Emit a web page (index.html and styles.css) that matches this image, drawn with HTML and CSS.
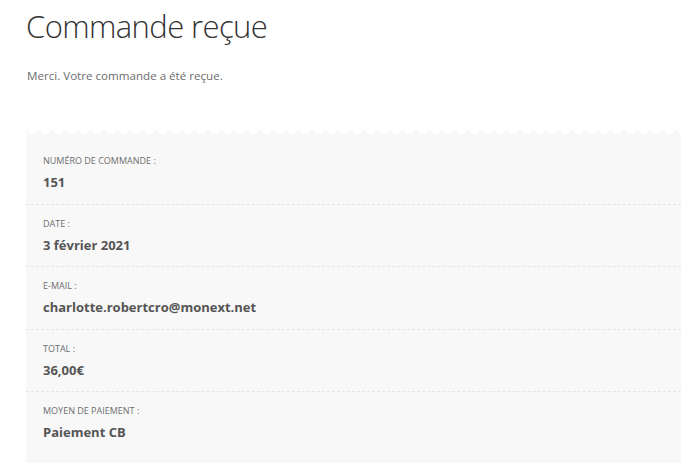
FILE: index.html
```html
<!doctype html>
<html lang="fr">

<head>
    <meta charset="UTF-8" />
    <meta name="viewport" content="width=device-width, initial-scale=1.0" />
    <title>Commande reçue</title>
    <link rel="stylesheet" href="styles.css">
</head>

<body>
    <div class="page">
        <h1 class="page-title">Commande reçue</h1>

        <p class="thankyou">Merci. Votre commande a été reçue.</p>

        <!-- Order overview -->
        <ul class="order-details">
            <li class="order-row">
                <span class="order-label">Numéro de commande :</span>
                <strong class="order-value">151</strong>
            </li>
            <li class="order-row">
                <span class="order-label">Date :</span>
                <strong class="order-value">3 février 2021</strong>
            </li>
            <li class="order-row">
                <span class="order-label">E-mail :</span>
                <strong class="order-value">charlotte.robertcro@monext.net</strong>
            </li>
            <li class="order-row">
                <span class="order-label">Total :</span>
                <strong class="order-value">36,00€</strong>
            </li>
            <li class="order-row">
                <span class="order-label">Moyen de paiement :</span>
                <strong class="order-value">Paiement CB</strong>
            </li>
        </ul>
    </div>
</body>

</html>
```

FILE: styles.css
```css
body {
    margin: 0;
    font-family: 'Open Sans', 'Noto Sans', sans-serif;
    background: #ffffff;
    color: #6d6d6d;
}

.page {
    padding: 0 10px 0 26px;
}

.page-title {
    margin: 0;
    padding-top: 5px;
    font-size: 31px;
    font-weight: 300;
    line-height: 42px;
    color: #333333;
    letter-spacing: -0.6px;
}

.thankyou {
    margin: 20px 0 0 1px;
    font-size: 11.6px;
    line-height: 18px;
    color: #6d6d6d;
}

.order-details {
    position: relative;
    list-style: none;
    margin: 50px 0 0 0;
    padding: 0 0 9px 0;
    background: #f8f8f8;
}

.order-details::before,
.order-details::after {
    content: '';
    position: absolute;
    left: 0;
    right: 0;
    height: 5px;
    background-size: 13px 5px;
    background-repeat: repeat-x;
}

.order-details::before {
    top: -5px;
    background-image: radial-gradient(circle at 6.5px 0, transparent 4px, #f8f8f8 4.5px);
}

.order-details::after {
    bottom: -5px;
    background-image: radial-gradient(circle at 6.5px 5px, transparent 4px, #f8f8f8 4.5px);
}

.order-row {
    padding: 12px 17px 12.5px 17px;
    border-bottom: 1px dashed #e4e4e4;
}

.order-row:first-child {
    padding-top: 19px;
}

.order-row:last-child {
    border-bottom: none;
}

.order-label {
    display: block;
    font-size: 9px;
    line-height: 14px;
    text-transform: uppercase;
    color: #6d6d6d;
}

.order-value {
    display: block;
    margin-top: 5px;
    font-size: 13px;
    line-height: 18px;
    font-weight: 700;
    color: #555555;
}
```
